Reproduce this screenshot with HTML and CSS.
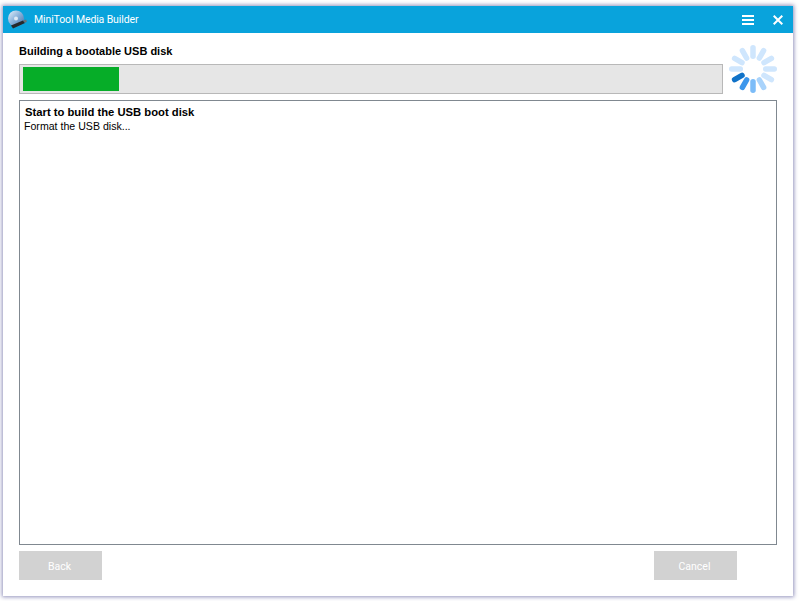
FILE: index.html
```html
<!DOCTYPE html>
<html lang="en">
<head>
    <meta charset="UTF-8">
    <meta name="viewport" content="width=device-width, initial-scale=1.0">
    <title>MiniTool Media Builder</title>
    <link rel="stylesheet" href="styles.css">
</head>
<body>

    <div class="window">
        <div class="titlebar">
            <svg class="app-icon" width="24" height="22" viewBox="0 0 24 22">
                <defs>
                    <linearGradient id="disc" x1="0" y1="0" x2="1" y2="1">
                        <stop offset="0" stop-color="#e8f2fb"/>
                        <stop offset="0.45" stop-color="#8fb6dd"/>
                        <stop offset="1" stop-color="#3f6fa8"/>
                    </linearGradient>
                </defs>
                <circle cx="11" cy="9.5" r="8" fill="url(#disc)"/>
                <circle cx="11" cy="9.5" r="2" fill="#dfeaf5"/>
                <path d="M6 16.5 L18 11.5 L20 14 L8 19.5 Z" fill="#26282b"/>
                <path d="M18 11.5 L21 10.5 L22 12.5 L20 14 Z" fill="#6b7075"/>
            </svg>
            <span class="app-title">MiniTool Media Builder</span>
            <button class="title-btn" type="button" aria-label="Menu">
                <svg width="12" height="10" viewBox="0 0 12 10"><path d="M0 1h12M0 5h12M0 9h12" stroke="#fff" stroke-width="2"/></svg>
            </button>
            <button class="title-btn" type="button" aria-label="Close">
                <svg width="10" height="10" viewBox="0 0 10 10"><path d="M.7.7l8.6 8.6M9.3.7L.7 9.3" stroke="#fff" stroke-width="2"/></svg>
            </button>
        </div>

        <div class="content">
            <div class="status">
                <div class="status-main">
                    <h2>Building a bootable USB disk</h2>
                    <div class="progress"><div class="progress-fill"></div></div>
                </div>
                <svg class="spinner" width="48" height="48" viewBox="-24 -24 48 48">
                    <g stroke-width="5.5" stroke-linecap="round" stroke="#cfe6fd">
                        <line x1="0" y1="-12.75" x2="0" y2="-21.25"/>
                        <line x1="6.4" y1="-11" x2="10.6" y2="-18.4"/>
                        <line x1="11" y1="-6.4" x2="18.4" y2="-10.6"/>
                        <line x1="12.75" y1="0" x2="21.25" y2="0"/>
                        <line x1="11" y1="6.4" x2="18.4" y2="10.6"/>
                        <line x1="6.4" y1="11" x2="10.6" y2="18.4" stroke="#a9d3fb"/>
                        <line x1="0" y1="12.75" x2="0" y2="21.25" stroke="#7cbcf8"/>
                        <line x1="-6.4" y1="11" x2="-10.6" y2="18.4" stroke="#3d97ec"/>
                        <line x1="-11" y1="6.4" x2="-18.4" y2="10.6" stroke="#0f72c8"/>
                        <line x1="-12.75" y1="0" x2="-21.25" y2="0"/>
                        <line x1="-11" y1="-6.4" x2="-18.4" y2="-10.6"/>
                        <line x1="-6.4" y1="-11" x2="-10.6" y2="-18.4"/>
                    </g>
                </svg>
            </div>

            <div class="log">
                <div class="log-title">Start to build the USB boot disk</div>
                <div class="log-line">Format the USB disk...</div>
            </div>

            <div class="actions">
                <button class="btn" type="button" disabled>Back</button>
                <button class="btn btn-cancel" type="button" disabled>Cancel</button>
            </div>
        </div>
    </div>

</body>
</html>
```

FILE: styles.css
```css
html, body {
    height: 100%;
}
body {
    font-family: "Liberation Sans", Arial, sans-serif;
    font-size: 11px;
    color: #000;
    background-color: #fff;
    margin: 0;
    padding: 6px 6px 5px 3px;
    box-sizing: border-box;
    overflow: hidden;
}
.window {
    height: 100%;
    display: flex;
    flex-direction: column;
    background: #fff;
    box-shadow: 0 0 4px 1px rgba(100, 100, 160, 0.7);
}
.titlebar {
    height: 27px;
    flex: none;
    display: flex;
    align-items: center;
    background-color: #09a3dc;
    color: #fff;
}
.app-icon {
    margin-left: 2px;
    margin-right: 5px;
    flex: none;
}
.app-title {
    flex: 1;
    font-family: Roboto, sans-serif;
    font-size: 10.5px;
    letter-spacing: -0.12px;
}
.title-btn {
    width: 30px;
    height: 27px;
    padding: 0;
    border: none;
    background: none;
    display: flex;
    align-items: center;
    justify-content: center;
}
.content {
    flex: 1;
    display: flex;
    flex-direction: column;
    padding: 7px 16px 16px 16px;
}
.status {
    display: flex;
    gap: 6px;
    align-items: flex-start;
}
.status-main {
    flex: 1;
    padding-top: 5px;
}
h2 {
    margin: 0 0 6px 0;
    font-size: 11px;
    line-height: 13px;
}
.progress {
    height: 30px;
    box-sizing: border-box;
    padding: 2px 3px;
    border: 1px solid #b8b8b8;
    background-color: #e6e6e6;
}
.progress-fill {
    width: 96px;
    height: 100%;
    background-color: #06ad28;
}
.spinner {
    flex: none;
    margin-top: 5px;
}
.log {
    flex: 1;
    margin-top: 6px;
    padding: 5px 5px;
    border: 1px solid #808890;
    line-height: 13px;
}
.log-title {
    font-weight: bold;
    font-size: 11.25px;
}
.log-line {
    font-size: 10.6px;
    line-height: 14px;
    text-indent: -1px;
}
.actions {
    display: flex;
    justify-content: space-between;
    margin-top: 6px;
    padding-right: 40px;
}
.btn {
    width: 83px;
    height: 29px;
    padding: 1px 2px 0 0;
    border: none;
    background-color: #d2d2d2;
    color: #fff;
    font-family: Roboto, sans-serif;
    font-size: 10.5px;
}
```
